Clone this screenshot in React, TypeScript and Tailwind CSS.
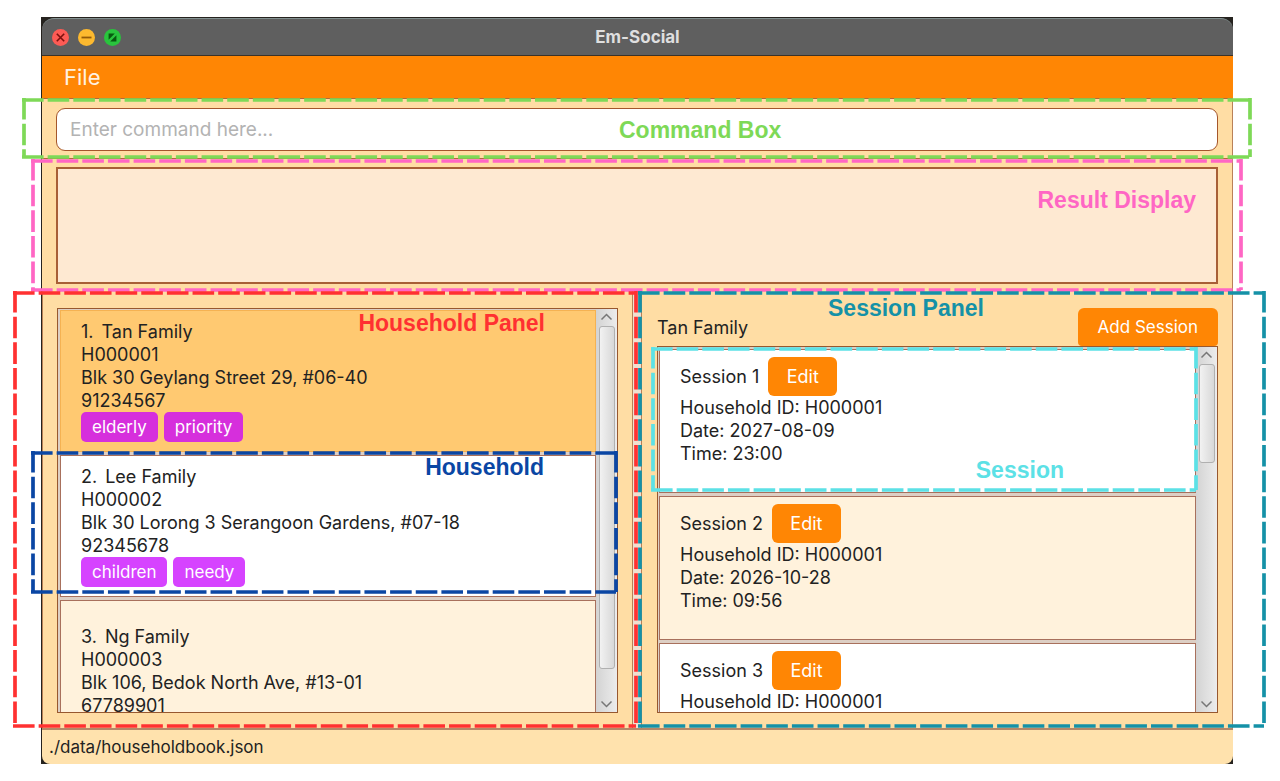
import type { ReactNode } from "react";

interface Household {
  name: string;
  id: string;
  address: string;
  phone: string;
  tags: string[];
  selected?: boolean;
}

interface Session {
  household: string;
  date?: string;
  time?: string;
}

const households: Household[] = [
  {
    name: "Tan Family",
    id: "H000001",
    address: "Blk 30 Geylang Street 29, #06-40",
    phone: "91234567",
    tags: ["elderly", "priority"],
    selected: true,
  },
  {
    name: "Lee Family",
    id: "H000002",
    address: "Blk 30 Lorong 3 Serangoon Gardens, #07-18",
    phone: "92345678",
    tags: ["children", "needy"],
  },
  {
    name: "Ng Family",
    id: "H000003",
    address: "Blk 106, Bedok North Ave, #13-01",
    phone: "67789901",
    tags: [],
  },
];

const sessions: Session[] = [
  { household: "H000001", date: "2027-08-09", time: "23:00" },
  { household: "H000001", date: "2026-10-28", time: "09:56" },
  { household: "H000001" },
];

/* Dashed frame with a caption, laid over the region it names. */
function Callout({
  className,
  labelClassName,
  label,
}: {
  className: string;
  labelClassName: string;
  label: string;
}) {
  return (
    <div className={`pointer-events-none absolute z-10 ${className}`}>
      <div className="absolute inset-[2px]">
        <svg
          className="block h-full w-full overflow-visible"
          fill="none"
          stroke="currentColor"
          strokeWidth="3.7"
          strokeDasharray="21.6 4.05"
          aria-hidden="true"
        >
          <line x1="-2" y1="0" x2="100%" y2="0" />
          <line x1="-2" y1="100%" x2="100%" y2="100%" />
          <line x1="0" y1="-2" x2="0" y2="100%" />
          <line x1="100%" y1="-2" x2="100%" y2="100%" />
        </svg>
      </div>
      <span
        className={`absolute font-['Liberation_Sans',Arial,sans-serif] text-[23px] leading-6 font-bold whitespace-nowrap ${labelClassName}`}
      >
        {label}
      </span>
    </div>
  );
}

function WindowButton({
  label,
  className,
  children,
}: {
  label: string;
  className: string;
  children: ReactNode;
}) {
  return (
    <button type="button" aria-label={label} className={`size-[17px] rounded-full ${className}`}>
      <svg viewBox="0 0 17 17" className="block size-full" aria-hidden="true">
        {children}
      </svg>
    </button>
  );
}

function ScrollBar({ thumbClassName }: { thumbClassName: string }) {
  return (
    <div
      aria-hidden="true"
      className="flex w-[21px] shrink-0 flex-col items-center bg-linear-to-r from-[#d3d3d3] to-[#ececec]"
    >
      <svg viewBox="0 0 21 17" className="h-[17px] w-full shrink-0" fill="none" stroke="#777" strokeWidth="1.5">
        <path d="M5.5 10.5 10.5 5.5 15.5 10.5" />
      </svg>
      <div className="min-h-0 w-4 flex-1">
        <div
          className={`w-full rounded-[3px] border border-[#b0b0b0] bg-linear-to-r from-[#f2f2f2] to-[#d8d8d8] ${thumbClassName}`}
        />
      </div>
      <svg viewBox="0 0 21 17" className="h-[17px] w-full shrink-0" fill="none" stroke="#777" strokeWidth="1.5">
        <path d="M5.5 6.5 10.5 11.5 15.5 6.5" />
      </svg>
    </div>
  );
}

function HouseholdCard({ household, index }: { household: Household; index: number }) {
  const tone = household.selected
    ? "border-[#f5b252] bg-[#ffc971]"
    : index % 2 === 1
      ? "border-[#a8705c] bg-white"
      : "border-[#a8705c] bg-[#fff2dc]";
  return (
    <li className={`flex h-[142px] shrink-0 flex-col justify-center border px-5 ${tone}`}>
      <p>
        <span className="mr-2">{index + 1}.</span>
        {household.name}
      </p>
      <p>{household.id}</p>
      <p>{household.address}</p>
      <p>{household.phone}</p>
      {household.tags.length > 0 && (
        <ul className="flex gap-[6px]">
          {household.tags.map((tag) => (
            <li
              key={tag}
              className={`rounded-[5px] px-[11px] text-[17px] leading-[30px] text-white ${
                household.selected ? "bg-[#d62fdc]" : "bg-[#d643ff]"
              }`}
            >
              {tag}
            </li>
          ))}
        </ul>
      )}
    </li>
  );
}

function SessionCard({ session, index }: { session: Session; index: number }) {
  return (
    <li
      className={`h-36 shrink-0 border border-[#a8705c] px-5 pt-[7px] ${
        index % 2 === 0 ? "bg-white" : "bg-[#fff2dc]"
      }`}
    >
      <div className="flex items-center gap-[9px]">
        <h3>Session {index + 1}</h3>
        <button type="button" className="h-[39px] w-[69px] rounded-md bg-[#ff8604] text-white">
          Edit
        </button>
      </div>
      <p>Household ID: {session.household}</p>
      {session.date && <p>Date: {session.date}</p>}
      {session.time && <p>Time: {session.time}</p>}
    </li>
  );
}

export default function App() {
  return (
    <div className="h-screen min-h-[600px] bg-white py-[17px] pr-[47px] pl-[41px] font-[Inter,'Liberation_Sans',sans-serif] text-lg leading-[23px] text-[#222]">
      <div className="flex h-full flex-col bg-[#26231f] pt-px pl-px">
        <header className="grid h-[38px] shrink-0 grid-cols-[1fr_auto_1fr] items-center rounded-t-xl border-t border-b border-t-[#829090] border-b-[#3b3228] bg-[#5f5f5f] px-[10px]">
          <div className="flex gap-[9px]">
            <WindowButton label="Close" className="bg-[#fd5b55]">
              <path d="M4.8 4.8l7.4 7.4M12.2 4.8l-7.4 7.4" stroke="#7d100d" strokeWidth="1.6" />
            </WindowButton>
            <WindowButton label="Minimize" className="bg-[#fdb92f]">
              <path d="M3.5 8.5h10" stroke="#945a08" strokeWidth="1.8" />
            </WindowButton>
            <WindowButton label="Exit full screen" className="bg-[#29c43d]">
              <path d="M4.6 4.6h6.2l-6.2 6.2zM12.4 12.4H6.2l6.2-6.2z" fill="#07590f" />
            </WindowButton>
          </div>
          <h1 className="text-[17px] font-bold text-[#dfdfdf]">Em-Social</h1>
        </header>

        <nav className="flex h-[42px] shrink-0 items-center bg-[#ff8604] px-[22px]">
          <button type="button" className="text-[22px] leading-7 text-[#fff3e2]">
            File
          </button>
        </nav>

        <main className="flex min-h-0 flex-1 flex-col border-r border-[#b98158] bg-[#ffdda4]">
          <section className="relative shrink-0 border-y border-[#b0693c] px-[14px] pt-[9px] pb-[7px]">
            <input
              type="text"
              aria-label="Command"
              placeholder="Enter command here..."
              className="block h-[43px] w-full rounded-[9px] border border-[#a5562b] bg-white px-[13px] text-[19px] placeholder:text-[#b3b3b3]"
            />
            <Callout
              label="Command Box"
              className="-top-px -right-[20px] -bottom-px -left-[20px] text-[#7ed957]"
              labelClassName="top-5 left-[597px]"
            />
          </section>

          <section className="relative shrink-0 px-[14px] pt-2 pb-[7px]">
            <textarea
              readOnly
              aria-label="Result"
              className="block h-[117px] w-full resize-none border-2 border-[#a85f36] bg-[#fee9d2] p-3"
            />
            <Callout
              label="Result Display"
              className="top-0 -right-[11px] -bottom-px -left-[11px] text-[#ff66c4]"
              labelClassName="top-[29px] right-[47px]"
            />
          </section>

          <div className="flex min-h-0 flex-1">
            <section
              aria-label="Households"
              className="relative flex min-w-0 flex-1 flex-col border-x border-[#b98158] px-[14px] pt-[17px] pb-[15px]"
            >
              <div className="flex min-h-0 flex-1 border border-[#97582f] bg-[#ddcfc4] pl-[2px]">
                <ul className="flex min-w-0 flex-1 flex-col gap-[3px] overflow-y-auto pt-px [scrollbar-width:none]">
                  {households.map((household, index) => (
                    <HouseholdCard key={household.id} household={household} index={index} />
                  ))}
                </ul>
                <ScrollBar thumbClassName="h-[93%]" />
              </div>
              <Callout
                label="Household Panel"
                className="top-0 -right-[6px] bottom-0 -left-[30px] text-[#ff3131]"
                labelClassName="top-5 right-[93px]"
              />
              <Callout
                label="Household"
                className="top-[160px] right-[14px] -left-3 h-[143px] text-[#0a46a4]"
                labelClassName="top-1 right-[74px]"
              />
            </section>

            <div className="w-2 shrink-0 bg-[#f0e0d0]" />

            <section
              aria-label="Sessions"
              className="relative flex min-w-0 flex-1 flex-col border-l border-[#b98158] pt-[17px] pr-[14px] pb-[15px] pl-[15px]"
            >
              <div className="flex h-[38px] shrink-0 items-center justify-between">
                <h2>Tan Family</h2>
                <button
                  type="button"
                  className="h-full rounded-t-md rounded-b-[4px] bg-[#ff8604] px-5 text-[17px] text-white"
                >
                  Add Session
                </button>
              </div>
              <div className="flex min-h-0 flex-1 border border-[#97582f] bg-[#ddcfc4] pl-px">
                <ul className="flex min-w-0 flex-1 flex-col gap-[3px] overflow-y-auto pt-[2px] [scrollbar-width:none]">
                  {sessions.map((session, index) => (
                    <SessionCard key={index} session={session} index={index} />
                  ))}
                </ul>
                <ScrollBar thumbClassName="h-[30%]" />
              </div>
              <Callout
                label="Session Panel"
                className="top-0 -right-[34px] bottom-0 -left-1 text-[#1591a7]"
                labelClassName="top-[5px] left-[190px]"
              />
              <Callout
                label="Session"
                className="top-14 right-[34px] left-[9px] h-[145px] text-[#5ce1e6]"
                labelClassName="top-[111px] right-[134px]"
              />
            </section>
          </div>
        </main>

        <footer className="flex h-9 shrink-0 items-center rounded-b-lg border-t-2 border-[#b48768] bg-[#ffe2ad] px-[7px] text-[17px]">
          ./data/householdbook.json
        </footer>
      </div>
    </div>
  );
}
